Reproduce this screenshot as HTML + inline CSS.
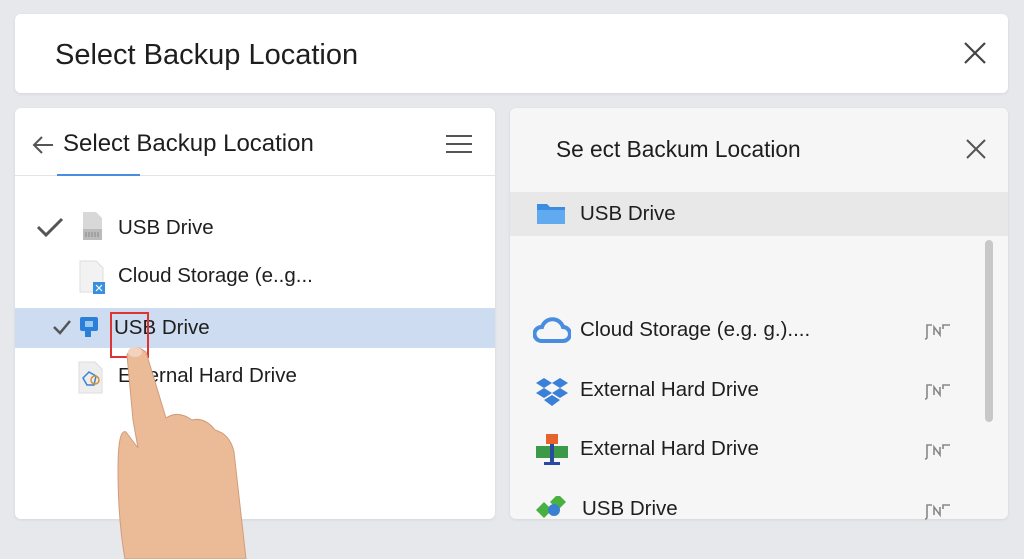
<!DOCTYPE html>
<html><head><meta charset="utf-8"><style>
*{margin:0;padding:0;box-sizing:border-box}
body{width:1024px;height:559px;background:#e6e8ec;font-family:"Liberation Sans",sans-serif;color:#1e1e1e;position:relative;overflow:hidden}
.card{position:absolute;background:#fff;border-radius:6px;box-shadow:0 1px 3px rgba(0,0,0,.08)}
.t{position:absolute;white-space:nowrap}
.st{position:absolute;left:924px}
</style></head><body>
<div class="card" style="left:15px;top:14px;width:993px;height:79px"></div>
<div class="t" style="left:55px;top:39px;font-size:29px">Select Backup Location</div>
<svg style="position:absolute;left:963px;top:41px" width="24" height="24"><path d="M2 2L22 22M22 2L2 22" stroke="#444" stroke-width="2.2"/></svg>

<div class="card" style="left:15px;top:108px;width:480px;height:411px"></div>
<svg style="position:absolute;left:31px;top:134px" width="24" height="22"><path d="M22 11H3M11 3L3 11L11 19" stroke="#555" stroke-width="2" fill="none"/></svg>
<div class="t" style="left:63px;top:130px;font-size:24px">Select Backup Location</div>
<svg style="position:absolute;left:446px;top:134px" width="26" height="20"><path d="M0 2H26M0 10H26M0 18H26" stroke="#555" stroke-width="2"/></svg>
<div style="position:absolute;left:15px;top:175px;width:480px;height:1px;background:#e4e4e4"></div>
<div style="position:absolute;left:57px;top:174px;width:83px;height:2px;background:#4a8de0"></div>

<svg style="position:absolute;left:36px;top:216px" width="28" height="22"><path d="M2 11L10 19L26 3" stroke="#555" stroke-width="3" fill="none"/></svg>
<svg style="position:absolute;left:81px;top:211px" width="22" height="30"><path d="M2 1H15L21 7V29H2Z" fill="#d8d8d8"/><rect x="2" y="18" width="19" height="11" fill="#bbb"/><path d="M5 21V26M8 21V26M11 21V26M14 21V26M17 21V26" stroke="#888"/></svg>
<div class="t" style="left:118px;top:216px;font-size:20.5px">USB Drive</div>
<svg style="position:absolute;left:79px;top:260px" width="30" height="36"><path d="M1 1H17L24 8V32H1Z" fill="#f2f2f2" stroke="#ddd"/><rect x="14" y="22" width="12" height="12" fill="#3a8ee0"/><path d="M17 25L23 31M23 25L17 31" stroke="#fff" stroke-width="1.2"/></svg>
<div class="t" style="left:118px;top:264px;font-size:20.5px">Cloud Storage (e..g...</div>
<div style="position:absolute;left:15px;top:308px;width:480px;height:40px;background:#cddcf0"></div>
<svg style="position:absolute;left:52px;top:319px" width="20" height="16"><path d="M2 8L8 14L18 2" stroke="#555" stroke-width="2.5" fill="none"/></svg>
<svg style="position:absolute;left:80px;top:316px" width="20" height="22"><rect x="0" y="1" width="18" height="14" rx="2" fill="#2a7fd8"/><rect x="5" y="5" width="8" height="6" fill="#9cc8f0"/><rect x="5" y="15" width="6" height="6" fill="#2a7fd8"/></svg>
<div class="t" style="left:114px;top:316px;font-size:20.5px">USB Drive</div>
<div style="position:absolute;left:110px;top:312px;width:39px;height:46px;border:2px solid #d33"></div>
<svg style="position:absolute;left:78px;top:361px" width="28" height="34"><path d="M1 1H17L24 8V32H1Z" fill="#eee" stroke="#ddd"/><path d="M5 17L11 11L18 15L16 24L9 24Z" fill="none" stroke="#3a7fd8" stroke-width="1.5"/><circle cx="17" cy="19" r="4" fill="none" stroke="#d89030" stroke-width="1.5"/></svg>
<div class="t" style="left:118px;top:364px;font-size:20.5px">External Hard Drive</div>
<svg style="position:absolute;left:0;top:0" width="1024" height="559"><path d="M127,355 Q133,342 146,352 L166,418 Q178,410 192,420 Q205,417 215,430 Q230,434 234,452 L246,559 L125,559 Q118,520 118,470 Q118,428 126,432 L138,448 L133,420 Z" fill="#ebbb97" stroke="#d29c7a"/><ellipse cx="135" cy="352" rx="7" ry="5" fill="#f3d3c0"/></svg>

<div class="card" style="left:510px;top:108px;width:498px;height:411px;background:#f6f6f6"></div>
<div class="t" style="left:556px;top:136px;font-size:22.7px">Se ect Backum Location</div>
<svg style="position:absolute;left:965px;top:138px" width="22" height="22"><path d="M2 2L20 20M20 2L2 20" stroke="#555" stroke-width="2"/></svg>
<div style="position:absolute;left:510px;top:192px;width:498px;height:44px;background:#e8e8e8"></div>
<svg style="position:absolute;left:536px;top:201px" width="30" height="24"><path d="M1 3H11L14 6H29V23H1Z" fill="#3b8de0"/><path d="M1 9H29V23H1Z" fill="#62aaf0"/></svg>
<div class="t" style="left:580px;top:202px;font-size:20.5px">USB Drive</div>
<div style="position:absolute;left:985px;top:240px;width:8px;height:182px;background:#c8c8c8;border-radius:4px"></div>
<svg style="position:absolute;left:533px;top:315px" width="38" height="28"><path d="M8 26H30A7 7 0 0 0 30 12A11 11 0 0 0 9 12A7 7 0 0 0 8 26Z" fill="none" stroke="#4a8de0" stroke-width="4"/></svg>
<div class="t" style="left:580px;top:318px;font-size:20.5px">Cloud Storage (e.g. g.)....</div>
<svg style="position:absolute;left:536px;top:378px" width="32" height="28"><path d="M8 0L16 5L8 10L0 5ZM24 0L32 5L24 10L16 5ZM8 10L16 15L8 20L0 15ZM24 10L32 15L24 20L16 15ZM16 17L24 22L16 28L8 22Z" fill="#3a7fd8"/></svg>
<div class="t" style="left:580px;top:378px;font-size:20.5px">External Hard Drive</div>
<svg style="position:absolute;left:536px;top:434px" width="32" height="32"><rect x="10" y="0" width="12" height="10" fill="#e8622c"/><rect x="0" y="12" width="14" height="12" fill="#3a9a48"/><rect x="18" y="12" width="14" height="12" fill="#3a9a48"/><rect x="14" y="10" width="4" height="18" fill="#2a4aa0"/><rect x="8" y="28" width="16" height="3" fill="#2a4aa0"/></svg>
<div class="t" style="left:580px;top:437px;font-size:20.5px">External Hard Drive</div>
<svg style="position:absolute;left:536px;top:496px" width="32" height="24"><path d="M0 14L8 6L16 14L8 22Z" fill="#4ab040"/><path d="M14 6L22 -2L30 6L22 14Z" fill="#4ab040"/><circle cx="18" cy="14" r="6" fill="#3a80d0"/></svg>
<div class="t" style="left:582px;top:497px;font-size:20.5px">USB Drive</div>
<svg class="st" style="top:321px" width="28" height="20"><path d="M1 18Q3 18 3 16V4H8M10 14V6L16 14V6M19 8V4H26" stroke="#888" stroke-width="1.6" fill="none"/></svg>
<svg class="st" style="top:381px" width="28" height="20"><path d="M1 18Q3 18 3 16V4H8M10 14V6L16 14V6M19 8V4H26" stroke="#888" stroke-width="1.6" fill="none"/></svg>
<svg class="st" style="top:441px" width="28" height="20"><path d="M1 18Q3 18 3 16V4H8M10 14V6L16 14V6M19 8V4H26" stroke="#888" stroke-width="1.6" fill="none"/></svg>
<svg class="st" style="top:501px" width="28" height="20"><path d="M1 18Q3 18 3 16V4H8M10 14V6L16 14V6M19 8V4H26" stroke="#888" stroke-width="1.6" fill="none"/></svg>
</body></html>
